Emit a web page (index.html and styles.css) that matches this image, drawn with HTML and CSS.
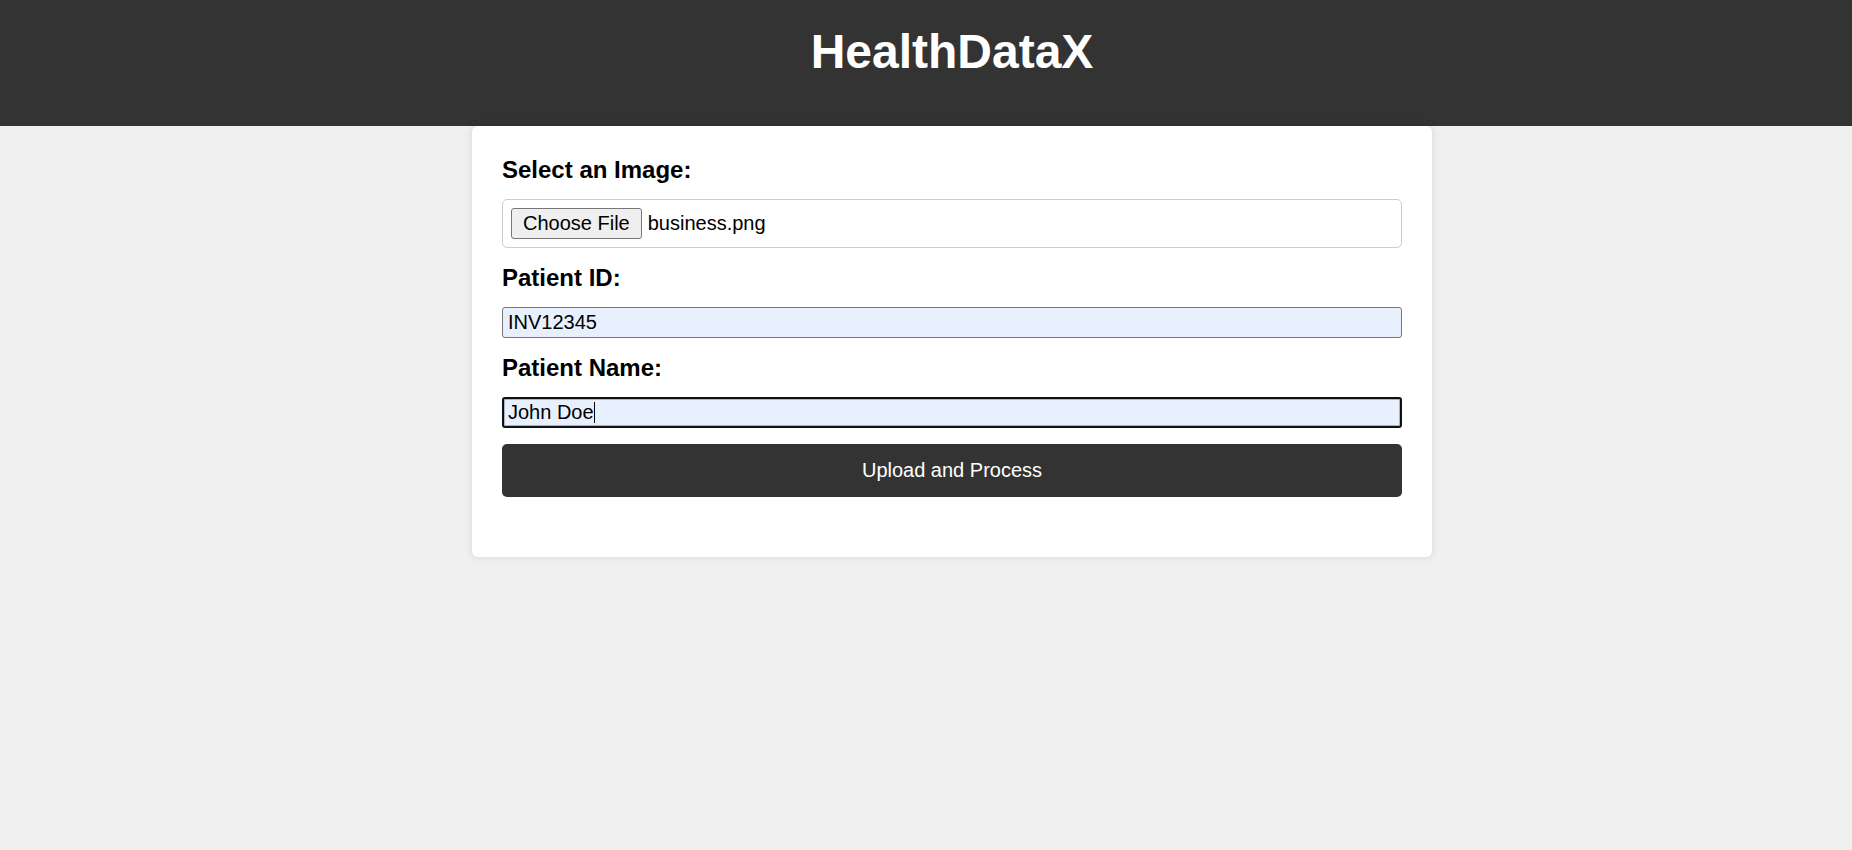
FILE: index.html
```html
<!DOCTYPE html>
<html lang="en">
<head>
<meta charset="utf-8">
<title>HealthDataX</title>
<link rel="stylesheet" href="styles.css">
</head>
<body>
<header class="site-header">
  <h1 class="site-title">HealthDataX</h1>
</header>
<main class="page">
  <div class="card">
    <form class="upload-form">
      <label class="field-label">Select an Image:</label>
      <div class="file-box">
        <span class="file-button">Choose File</span>
        <span class="file-name">business.png</span>
      </div>
      <label class="field-label">Patient ID:</label>
      <input class="text-input" type="text" value="INV12345">
      <label class="field-label">Patient Name:</label>
      <div class="input-wrap">
        <input class="text-input focused" type="text" value="John Doe">
        <span class="caret"></span>
      </div>
      <button class="submit-button" type="button">Upload and Process</button>
    </form>
  </div>
</main>
</body>
</html>
```
FILE: styles.css
```css
* {
  box-sizing: border-box;
}

html, body {
  margin: 0;
  padding: 0;
}

body {
  background: #f0f0f0;
  font-family: "Liberation Sans", Arial, sans-serif;
  color: #000;
  min-height: 850px;
}

.site-header {
  background: #333333;
  color: #ffffff;
  padding: 25px 0 47px 52px;
  text-align: center;
}

.site-title {
  margin: 0;
  font-size: 48px;
  line-height: 54px;
  font-weight: bold;
}

.page {
  padding-left: 52px;
  display: flex;
  justify-content: center;
}

.card {
  width: 960px;
  background: #ffffff;
  border-radius: 6px;
  box-shadow: 0 0 10px rgba(0, 0, 0, 0.1);
  padding: 30px 30px 60px;
}

.upload-form {
  display: flex;
  flex-direction: column;
}

.field-label {
  display: block;
  font-size: 24px;
  line-height: 28px;
  font-weight: bold;
  margin-bottom: 15px;
}

.file-box {
  display: flex;
  align-items: center;
  height: 49px;
  border: 1px solid #cccccc;
  border-radius: 5px;
  padding: 0 8px;
  margin-bottom: 16px;
  font-size: 20px;
}

.file-button {
  display: inline-block;
  height: 31px;
  line-height: 29px;
  padding: 0 11px;
  background: #efefef;
  border: 1px solid #767676;
  border-radius: 3px;
  color: #000;
  margin-right: 6px;
}

.file-name {
  color: #000;
  line-height: 23px;
}

.text-input {
  display: block;
  width: 100%;
  height: 31px;
  margin: 0 0 16px;
  padding: 3px 5px;
  font-family: "Liberation Sans", Arial, sans-serif;
  font-size: 20px;
  line-height: 23px;
  color: #000;
  background: #e8f0fe;
  border: 1px solid #767676;
  border-radius: 3px;
  outline: none;
}

.input-wrap {
  position: relative;
}

.text-input.focused {
  border: 2px solid #101010;
  padding: 2px 4px;
  box-shadow: inset 0 0 0 1px #a9b4c7;
}

.caret {
  position: absolute;
  left: 92px;
  top: 5px;
  width: 1px;
  height: 21px;
  background: #000;
}

.submit-button {
  display: block;
  width: 100%;
  height: 53px;
  padding: 0;
  border: none;
  border-radius: 5px;
  background: #333333;
  color: #ffffff;
  font-family: "Liberation Sans", Arial, sans-serif;
  font-size: 20px;
  cursor: pointer;
}
```
